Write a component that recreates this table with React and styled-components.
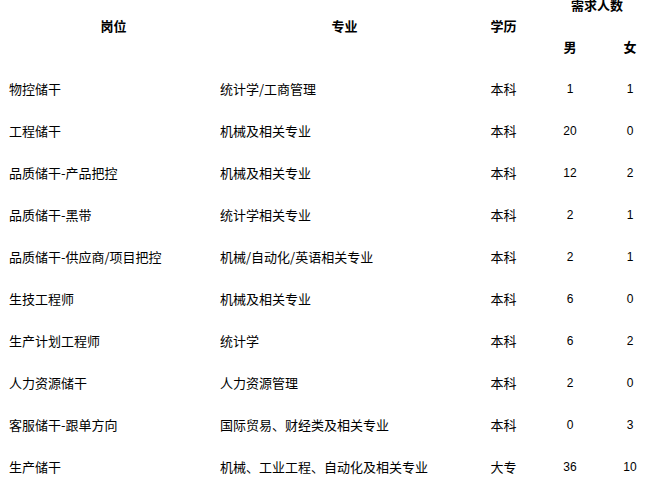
import React from 'react';
import styled, { createGlobalStyle } from 'styled-components';

const GlobalStyle = createGlobalStyle`
  html, body {
    margin: 0;
    padding: 0;
    background: #fff;
    overflow: hidden;
  }
  body {
    font-family: "Noto Sans CJK SC", "Liberation Sans", sans-serif;
    color: #000;
  }
`;

const Page = styled.div`
  padding: 0 0 0 8px;
`;

const Table = styled.table`
  border-collapse: collapse;
  table-layout: fixed;
  width: 649px;
  margin-top: -16px;
  font-size: 13px;
`;

const Row = styled.tr`
  height: 42px;
`;

const Th = styled.th`
  padding: 0;
  font-weight: bold;
  font-size: 13px;
  text-align: center;
  vertical-align: middle;
  line-height: 14px;
`;

const Td = styled.td`
  padding: 0 0 0 ${(p) => (p.$center ? 0 : 1)}px;
  text-align: ${(p) => (p.$center ? 'center' : 'left')};
  vertical-align: middle;
  white-space: nowrap;
  line-height: 14px;
`;

const Num = styled(Td)`
  font-family: "Liberation Sans", "Noto Sans CJK SC", sans-serif;
  font-size: 12px;
`;

const jobs = [
  ['物控储干', '统计学/工商管理', '本科', 1, 1],
  ['工程储干', '机械及相关专业', '本科', 20, 0],
  ['品质储干-产品把控', '机械及相关专业', '本科', 12, 2],
  ['品质储干-黑带', '统计学相关专业', '本科', 2, 1],
  ['品质储干-供应商/项目把控', '机械/自动化/英语相关专业', '本科', 2, 1],
  ['生技工程师', '机械及相关专业', '本科', 6, 0],
  ['生产计划工程师', '统计学', '本科', 6, 2],
  ['人力资源储干', '人力资源管理', '本科', 2, 0],
  ['客服储干-跟单方向', '国际贸易、财经类及相关专业', '本科', 0, 3],
  ['生产储干', '机械、工业工程、自动化及相关专业', '大专', 36, 10],
];

const App = () => (
  <Page>
    <GlobalStyle />
    <Table>
      <colgroup>
        <col style={{ width: 211 }} />
        <col style={{ width: 251 }} />
        <col style={{ width: 67 }} />
        <col style={{ width: 66 }} />
        <col style={{ width: 54 }} />
      </colgroup>
      <thead>
        <Row>
          <Th rowSpan={2}>岗位</Th>
          <Th rowSpan={2}>专业</Th>
          <Th rowSpan={2}>学历</Th>
          <Th colSpan={2}>需求人数</Th>
        </Row>
        <Row>
          <Th>男</Th>
          <Th>女</Th>
        </Row>
      </thead>
      <tbody>
        {jobs.map(([post, major, edu, male, female]) => (
          <Row key={post}>
            <Td>{post}</Td>
            <Td>{major}</Td>
            <Td $center>{edu}</Td>
            <Num $center>{male}</Num>
            <Num $center>{female}</Num>
          </Row>
        ))}
      </tbody>
    </Table>
  </Page>
);

export default App;
